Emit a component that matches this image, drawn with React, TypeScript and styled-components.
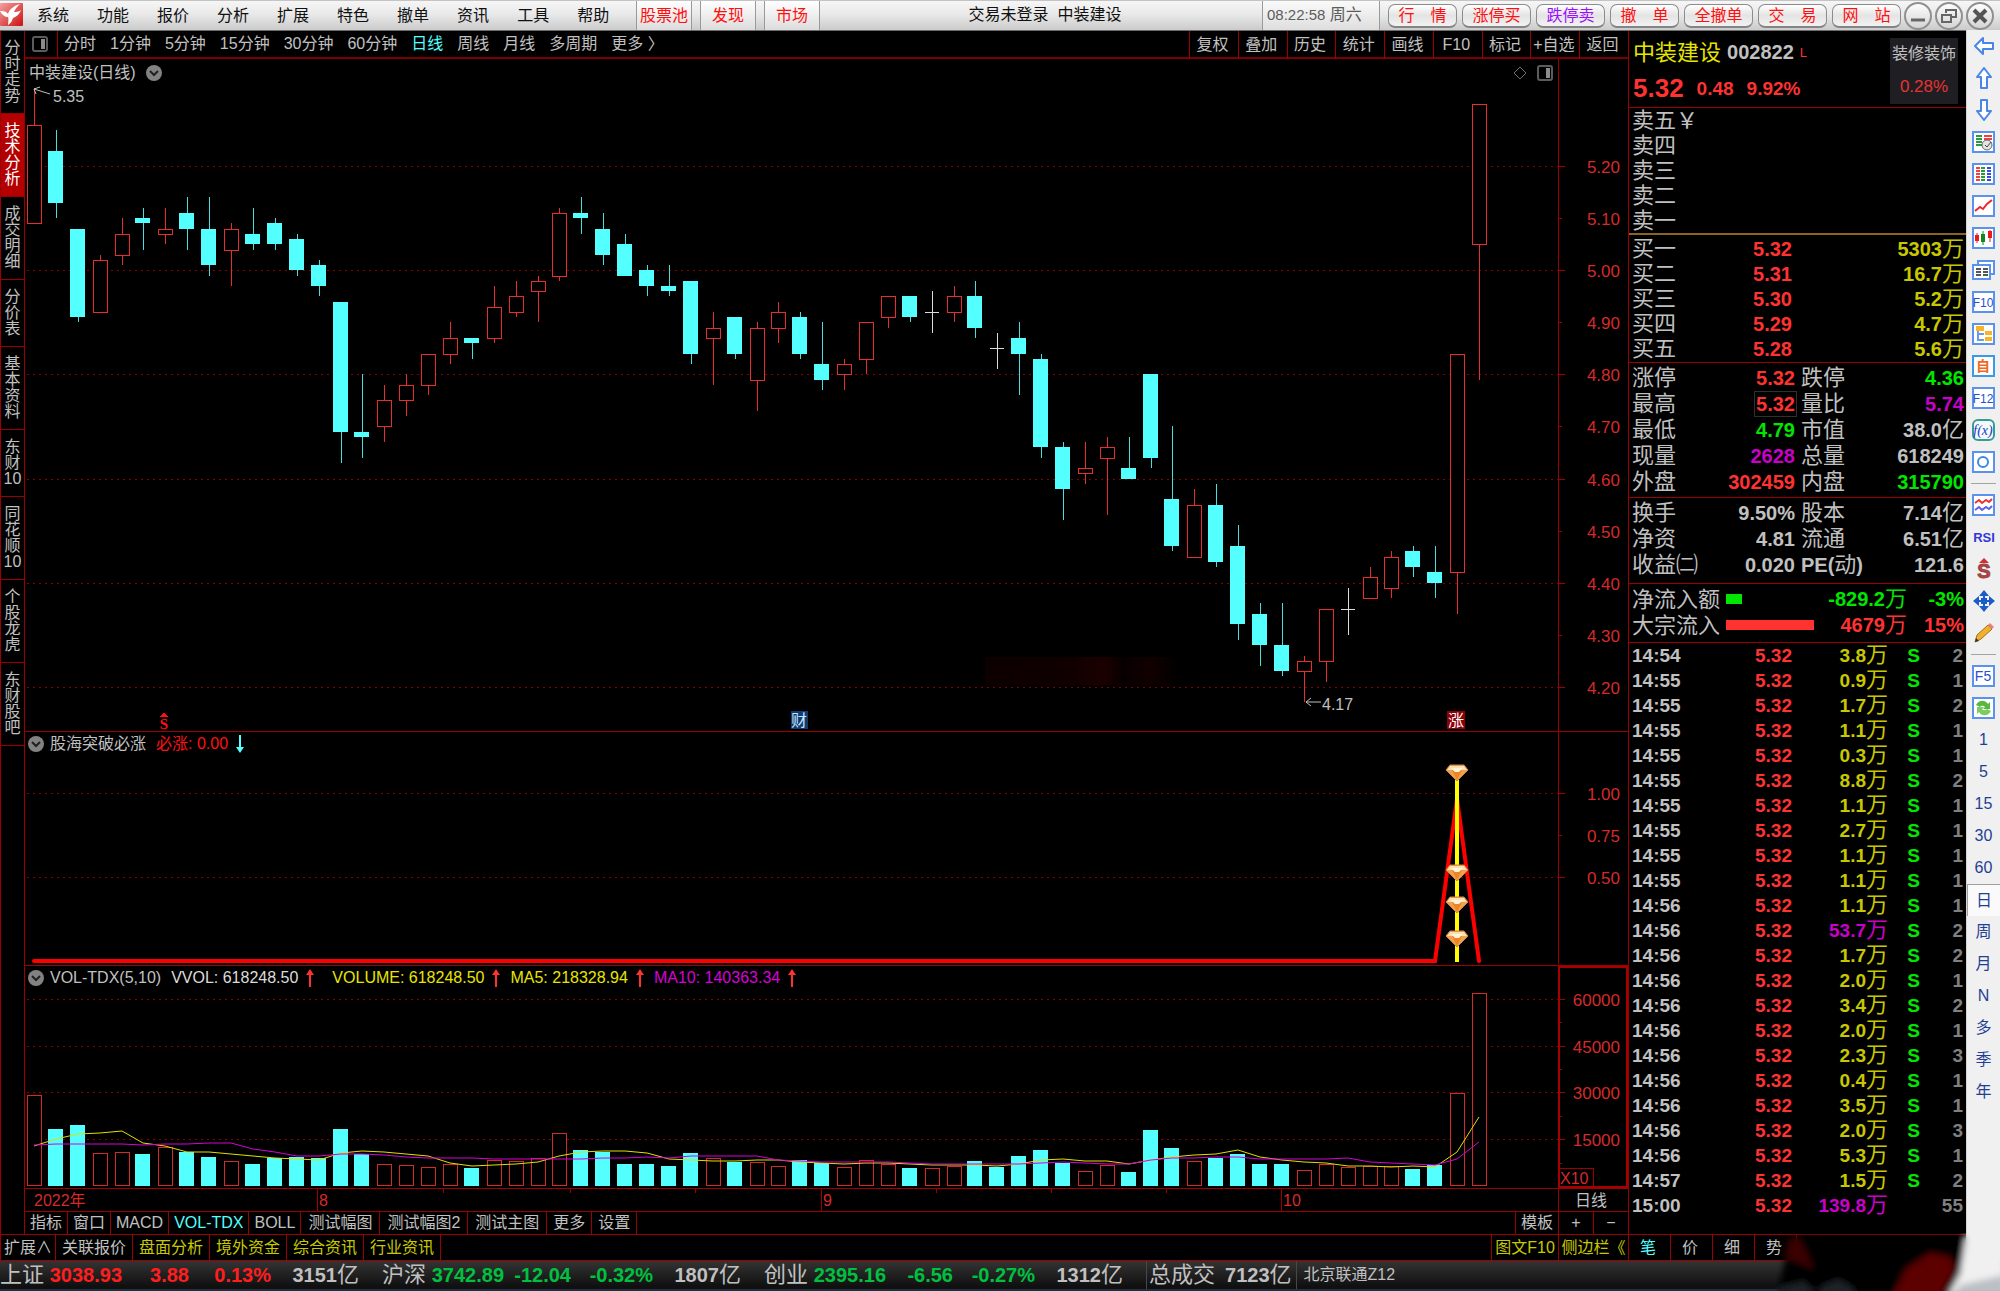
import React, { useLayoutEffect, useRef, useState } from "react";
import styled, { createGlobalStyle, css } from "styled-components";

const c = {
  line: "#9c0000",
  lineDim: "#7c0000",
  red: "#ff3232",
  axis: "#d42a2a",
  cyan: "#54ffff",
  green: "#00e600",
  yellow: "#c8c800",
  magenta: "#c800c8",
  text: "#c0c0c0",
  gray: "#808080",
};
const sans = `"Liberation Sans", "Noto Sans CJK SC", sans-serif`;

const Global = createGlobalStyle`
  * { box-sizing: border-box; }
  body { margin: 0; background: #000; font: 16px/20px ${sans}; color: ${c.text}; }
  button { font: inherit; color: inherit; background: none; border: 0; padding: 0; margin: 0; white-space: nowrap; cursor: pointer; }
  table { border-collapse: collapse; width: 100%; table-layout: fixed; }
  td, th { padding: 0; font-weight: 400; text-align: right; white-space: nowrap; }
  svg { display: block; }
`;

/* ---------- frame ---------- */
const Page = styled.div`
  height: 100vh;
  min-height: 900px;
  display: flex;
  flex-direction: column;
  overflow: hidden;
  position: relative;
`;
const Body = styled.div`
  flex: 1;
  min-height: 0;
  display: grid;
  grid-template-columns: minmax(0, 1fr) 338px 34px;
`;
const Left = styled.div`
  display: flex;
  flex-direction: column;
  min-height: 0;
`;
const Upper = styled.div`
  flex: 1;
  min-height: 0;
  display: grid;
  grid-template-columns: 25px minmax(0, 1fr);
  border-bottom: 1px solid ${c.line};
`;

/* ---------- title bar ---------- */
const TitleBar = styled.header`
  height: 31px;
  flex: none;
  display: flex;
  align-items: stretch;
  color: #101010;
  background: linear-gradient(#f6f6f6, #e9e9e9 45%, #cbcbcb);
  border-top: 1px solid #c4c4c4;
  border-bottom: 1px solid #6c6c6c;
`;
const LogoBox = styled.div`
  width: 37px;
  padding-top: 2px;
`;
const Menu = styled.nav`
  display: flex;
  gap: 28px;
  width: 599px;
`;
const HotButton = styled.button`
  color: #ff1010;
  width: 56px;
  margin-right: 8px;
  border-left: 1px solid #9a9a9a;
  border-right: 1px solid #9a9a9a;
  background: linear-gradient(#ffffff, #eeeeee 50%, #dcdcdc);
`;
const Caption = styled.div`
  flex: 1;
  text-align: center;
  line-height: 28px;
  white-space: pre;
`;
const Clock = styled.div`
  width: 118px;
  padding-left: 4px;
  line-height: 28px;
  color: #5c5c5c;
  border-left: 1px solid #9a9a9a;
  border-right: 1px solid #9a9a9a;
  background: linear-gradient(#fafafa, #dedede);
  white-space: nowrap;
  span { font-size: 15px; }
`;
const Quick = styled.div`
  display: flex;
  align-items: center;
  gap: 5px;
  padding: 0 3px 0 8px;
`;
const Pill = styled.button<{ $color?: string }>`
  width: 69px;
  height: 24px;
  border: 1px solid #8c8c8c;
  border-bottom: 2px solid #848484;
  border-radius: 7px;
  line-height: 21px;
  background: linear-gradient(#ffffff, #e4e4e4 50%, #f2f2f2);
  color: ${(p) => p.$color || "#ff1010"};
`;
const WinButtons = styled.div`
  display: flex;
  align-items: center;
  gap: 3px;
  padding-right: 6px;
`;
const WinButton = styled.button`
  width: 28px;
  height: 28px;
  border: 2px solid #909090;
  border-radius: 50%;
  display: grid;
  place-items: center;
  background: linear-gradient(#fdfdfd, #d4d4d4);
`;

/* ---------- left rail ---------- */
const Rail = styled.nav`
  border-left: 1px solid ${c.line};
  border-right: 1px solid ${c.line};
  overflow: hidden;
`;
const RailTab = styled.button<{ $on?: boolean }>`
  display: block;
  width: 100%;
  padding: 9px 0;
  line-height: 16px;
  border-bottom: 1px solid ${c.line};
  white-space: pre-line;
  ${(p) => p.$on && css`background: #b40000; color: #fff;`}
`;

/* ---------- centre ---------- */
const Centre = styled.div`
  display: flex;
  flex-direction: column;
  min-width: 0;
  min-height: 0;
`;
const Toolbar = styled.div`
  flex: none;
  height: 28px;
  display: flex;
  border-bottom: 2px solid ${c.lineDim};
`;
const ToggleBox = styled.button`
  width: 33px;
  padding-right: 2px;
  display: grid;
  place-items: center;
  border-right: 1px solid ${c.line};
`;
const Periods = styled.nav`
  display: flex;
  gap: 14px;
  padding-left: 6px;
  flex: 1;
  align-items: center;
`;
const Period = styled.button<{ $on?: boolean }>`
  line-height: 28px;
  color: ${(p) => (p.$on ? c.cyan : c.text)};
`;
const ToolCells = styled.div`
  display: grid;
  grid-template-columns: repeat(9, 1fr);
  width: 439px;
  button { border-left: 1px solid ${c.line}; padding-right: 3px; line-height: 28px; }
`;
const Panel = styled.section<{ $grow: number }>`
  flex: ${(p) => p.$grow} 1 0;
  min-height: 0;
  display: grid;
  grid-template: minmax(0, 1fr) / minmax(0, 1fr);
  border-bottom: 1px solid ${c.line};
`;
const Canvas = styled.div`
  grid-area: 1 / 1;
  min-height: 0;
  overflow: hidden;
`;
const PanelHead = styled.div<{ $tall?: boolean }>`
  grid-area: 1 / 1;
  align-self: start;
  z-index: 1;
  display: flex;
  align-items: center;
  height: ${(p) => (p.$tall ? 27 : 24)}px;
  padding: 0 75px 0 ${(p) => (p.$tall ? 4 : 3)}px;
  gap: ${(p) => (p.$tall ? 10 : 6)}px;
  white-space: nowrap;
`;
const Reading = styled.span<{ $color: string; $gap?: number }>`
  display: inline-flex;
  align-items: center;
  gap: 8px;
  color: ${(p) => p.$color};
  margin-left: ${(p) => p.$gap || 0}px;
`;
const Spacer = styled.span`flex: 1;`;
const DateAxis = styled.div`
  height: 23px;
  flex: none;
  border-bottom: 1px solid ${c.line};
`;
const Strip = styled.div<{ $h: number; $line?: boolean }>`
  flex: none;
  display: flex;
  height: ${(p) => p.$h}px;
  ${(p) => p.$line && css`border-left: 1px solid ${c.line};`}
`;
const StripTab = styled.button<{ $pad?: number; $w?: number; $color?: string; $side?: boolean }>`
  padding: 0 ${(p) => p.$pad ?? 5}px;
  ${(p) => p.$w && css`width: ${p.$w}px;`}
  color: ${(p) => p.$color || c.text};
  ${(p) => (p.$side ? css`border-left: 1px solid ${c.line};` : css`border-right: 1px solid ${c.line};`)}
`;

/* ---------- quote panel ---------- */
const Quote = styled.aside`
  border-left: 1px solid ${c.line};
  display: flex;
  flex-direction: column;
  min-height: 0;
  font-size: 22px;
  line-height: 25px;
`;
const QuoteHead = styled.div`
  height: 77px;
  flex: none;
  display: flex;
  justify-content: space-between;
  padding: 7px 8px 3px 4px;
  border-bottom: 1px solid ${c.line};
`;
const NameRow = styled.div`
  display: flex;
  align-items: center;
  gap: 6px;
  height: 28px;
  color: #e6e600;
  b { font-size: 20px; color: ${c.text}; }
  sup { font-size: 13px; line-height: 13px; color: ${c.red}; align-self: center; }
`;
const PriceRow = styled.div`
  display: flex;
  align-items: center;
  gap: 13px;
  height: 44px;
  color: ${c.red};
  font-weight: 700;
  font-size: 19px;
  strong { font-size: 26px; }
`;
const Sector = styled.div`
  width: 68px;
  background: #1f1f23;
  text-align: center;
  font-size: 16px;
  padding-top: 3px;
  white-space: nowrap;
  span { display: block; color: #e63232; font-size: 17px; padding-top: 8px; }
`;
const Block = styled.div<{ $top?: number; $bottom?: number; $color?: string }>`
  flex: none;
  padding: ${(p) => p.$top || 0}px 2px ${(p) => p.$bottom || 0}px 3px;
  border-bottom: ${(p) => (p.$color ? 2 : 1)}px solid ${(p) => p.$color || c.line};
`;
const BookRow = styled.tr`
  height: 25px;
  th { text-align: left; width: 80px; line-height: 24px; }
  td:nth-child(2) { width: 80px; }
  td { line-height: 20px; }
`;
const StatRow = styled.tr`
  height: 26px;
  th { text-align: left; font-weight: 400; line-height: 24px; }
  td { line-height: 20px; }
  th:first-child { width: 84px; }
  td:nth-child(2) { width: 79px; }
  th:nth-child(3) { width: 74px; padding-left: 6px; }
`;
const Num = styled.b<{ $color?: string; $small?: boolean; $boxed?: boolean }>`
  color: ${(p) => p.$color || c.text};
  font-size: ${(p) => (p.$small ? 19 : 20)}px;
  i { font-style: normal; font-weight: 400; font-size: 22px; line-height: 20px; }
  ${(p) => p.$boxed && css`outline: 1px solid #303030; outline-offset: 1px;`}
`;
const FlowRow = styled.div`
  display: grid;
  grid-template-columns: 94px 1fr 84px 57px;
  align-items: center;
  height: 26px;
  text-align: right;
  white-space: nowrap;
  > span:first-child { text-align: left; }
`;
const FlowBar = styled.span<{ $color: string }>`
  display: block;
  height: 10px;
  background: ${(p) => p.$color};
`;
const Ticks = styled.div`
  flex: 1;
  min-height: 0;
  overflow: hidden;
  padding: 0 3px 0 3px;
`;
const TickRow = styled.tr`
  height: 25px;
  line-height: 20px;
  td { height: 25px; }
  td:nth-child(1) { width: 60px; text-align: left; }
  td:nth-child(2) { width: 100px; }
  td:nth-child(3) { width: 96px; }
  td:nth-child(4) { width: 32px; }
`;
const QuoteTabs = styled.nav`
  height: 26px;
  flex: none;
  display: flex;
  border-top: 1px solid ${c.line};
  font-size: 16px;
  button { width: 42px; border-right: 1px solid ${c.line}; padding-right: 3px; }
  button:first-child { color: ${c.cyan}; }
`;

/* ---------- right tool column ---------- */
const Tools = styled.nav`
  background: #f0f0f0;
  border-left: 1px solid #d4d4d4;
  margin-top: -1px;
  color: #1f3f94;
  overflow: hidden;
`;
const Tool = styled.button<{ $on?: boolean }>`
  display: grid;
  place-items: center;
  width: 100%;
  height: 32px;
  ${(p) => p.$on && css`
    background: #fafafa;
    border-top: 1px solid #a0a0a0;
    border-left: 1px solid #a0a0a0;
  `}
`;
const ToolRule = styled.hr`
  margin: 5px 4px;
  border: 0;
  height: 1px;
  background: #a4a4a4;
`;

/* ---------- status bar ---------- */
const Status = styled.footer`
  height: 31px;
  flex: none;
  display: flex;
  align-items: center;
  background: linear-gradient(#343434, #101010 90%);
  border-top: 1px solid ${c.line};
  border-bottom: 2px solid #1c3040;
  font-size: 22px;
  line-height: 26px;
  white-space: nowrap;
`;
const IndexGroup = styled.div`
  display: grid;
  grid-template-columns: 49px 73px 67px 82px 88px;
  width: 382px;
  text-align: right;
  > span:first-child { text-align: left; }
`;
const StatusCell = styled.div<{ $small?: boolean }>`
  display: flex;
  align-items: center;
  gap: 10px;
  height: 28px;
  border-left: 1px solid #484848;
  font-size: ${(p) => (p.$small ? 16 : 22)}px;
  padding: 0 4px 0 ${(p) => (p.$small ? 7 : 2)}px;
`;
const Smear = styled.svg`
  position: absolute;
  right: 0;
  bottom: 0;
`;

/* ---------- data ---------- */
type Bar = [string, number, number, number, number, number];
const bars: Bar[] = [
  ["U", 528, 509, 535, 509, 91], ["D", 523, 513, 527, 510, 57], ["D", 508, 491, 508, 490, 61],
  ["U", 502, 492, 503, 492, 33], ["U", 507, 503, 510, 501, 34], ["D", 510, 509, 512, 504, 32],
  ["U", 508, 507, 512, 505, 39], ["D", 511, 508, 514, 504, 34], ["D", 508, 501, 514, 499, 29],
  ["U", 508, 504, 509, 497, 25], ["D", 507, 505, 512, 504, 22], ["D", 509, 505, 510, 504, 28],
  ["D", 506, 500, 507, 499, 29], ["D", 501, 497, 502, 495, 28], ["D", 494, 469, 494, 463, 57],
  ["D", 469, 468, 480, 464, 32], ["U", 475, 470, 478, 467, 22], ["U", 478, 475, 480, 472, 21],
  ["U", 484, 478, 484, 476, 19], ["U", 487, 484, 490, 482, 22], ["D", 487, 486, 487, 483, 18],
  ["U", 493, 487, 497, 486, 26], ["U", 495, 492, 498, 491, 25], ["U", 498, 496, 499, 490, 28],
  ["U", 511, 499, 512, 498, 53], ["D", 511, 510, 514, 507, 36], ["D", 508, 503, 511, 501, 34],
  ["D", 505, 499, 507, 499, 22], ["D", 500, 497, 501, 495, 22], ["D", 497, 496, 501, 495, 20],
  ["D", 498, 484, 498, 482, 33], ["U", 489, 487, 492, 478, 28], ["D", 491, 484, 491, 483, 24],
  ["U", 489, 479, 490, 473, 24], ["U", 492, 489, 494, 486, 20], ["D", 491, 484, 492, 483, 26],
  ["D", 482, 479, 490, 477, 23], ["U", 482, 480, 483, 477, 19], ["U", 490, 483, 490, 480, 26],
  ["U", 495, 491, 495, 489, 22], ["D", 495, 491, 495, 490, 18], ["F", 492, 492, 496, 488, 18],
  ["U", 495, 492, 497, 490, 20], ["D", 495, 489, 498, 487, 25], ["G", 485, 485, 488, 481, 19],
  ["D", 487, 484, 490, 476, 30], ["D", 483, 466, 484, 464, 36], ["D", 466, 458, 467, 452, 23],
  ["U", 462, 461, 467, 459, 15], ["U", 466, 464, 468, 453, 21], ["D", 462, 460, 468, 460, 14],
  ["D", 480, 464, 480, 462, 56], ["D", 456, 447, 470, 446, 38], ["U", 455, 445, 458, 445, 25],
  ["D", 455, 444, 459, 443, 28], ["D", 447, 432, 451, 429, 32], ["D", 434, 428, 436, 424, 22],
  ["D", 428, 423, 436, 422, 22], ["U", 425, 423, 426, 417, 16], ["U", 435, 425, 435, 421, 22],
  ["F", 435, 435, 439, 430, 19], ["U", 441, 437, 443, 437, 20], ["U", 445, 439, 446, 437, 20],
  ["D", 446, 443, 447, 441, 17], ["D", 442, 440, 447, 437, 21], ["U", 484, 442, 484, 434, 93],
  ["U", 532, 505, 532, 479, 193],
];
const average = (n: number, seed: number[]) =>
  bars.map((_, i) => (i < n - 1 ? seed[i] : bars.slice(i - n + 1, i + 1).reduce((s, b) => s + b[5], 0) / n));
const ma5 = average(5, [40, 47, 52, 53]);
const ma10 = average(10, [41, 42, 42, 42, 42, 41, 42, 42, 43]);

const AXIS = 70;
const xAt = (w: number, i: number) => Math.round(9 + (i * (w - AXIS - 88)) / 66);

function useSize() {
  const ref = useRef<HTMLDivElement>(null);
  const [size, setSize] = useState({ w: 1603, h: 200 });
  useLayoutEffect(() => {
    const el = ref.current!;
    const read = () => setSize({ w: el.clientWidth, h: el.clientHeight });
    read();
    const ro = new ResizeObserver(read);
    ro.observe(el);
    return () => ro.disconnect();
  }, []);
  return { ref, ...size };
}

/* ---------- small drawings ---------- */
const Chevron = () => (
  <svg width="16" height="16" viewBox="0 0 16 16" role="img" aria-label="展开">
    <circle cx="8" cy="8" r="8" fill="#828282" />
    <path d="M4 6l4 4 4-4" fill="none" stroke="#202020" strokeWidth="2" />
  </svg>
);
const PanelIcon = () => (
  <svg width="16" height="16" viewBox="0 0 16 16">
    <rect x="1" y="1" width="14" height="14" rx="2" fill="none" stroke="#5c5c5c" strokeWidth="2" />
    <rect x="9" y="3" width="4" height="10" fill="#8c8c8c" />
  </svg>
);
const Arrow = ({ down }: { down?: boolean }) => (
  <svg width="8" height="18" viewBox="0 0 8 18">
    {down ? (
      <path d="M3 0h2v12h3L4 18 0 12h3z" fill={c.cyan} />
    ) : (
      <path d="M3 18h2V6h3L4 0 0 6h3z" fill={c.red} />
    )}
  </svg>
);
const Logo = () => (
  <svg width="23" height="23" viewBox="0 0 23 23" role="img" aria-label="通达信">
    <defs>
      <linearGradient id="lg" x1="0" y1="0" x2="1" y2="1">
        <stop offset="0" stopColor="#f4a0a0" />
        <stop offset="1" stopColor="#cc1010" />
      </linearGradient>
    </defs>
    <rect width="23" height="23" rx="1" fill="url(#lg)" />
    <path d="M0 8c3 0 6 0 8 3 1-4 5-8 12-10-3 3-5 5-6 8 2 0 4 0 7-2-2 5-5 7-8 8-1 3-2 5-5 7 0-3 1-6 0-8-3 0-6-2-8-6z" fill="#fff" />
  </svg>
);
const Gem = ({ x, y }: { x: number; y: number }) => (
  <g transform={`translate(${x - 11} ${y})`}>
    <path d="M4 0h14l4 5-11 11L0 5z" fill="#f2a04c" stroke="#c98a4e" />
    <path d="M4 1h14l3 4H1z" fill="#ffdfae" />
    <path d="M6 5h10l-5 10z" fill="#ee8424" />
    <path d="M5 3h12l-4 4H9z" fill="#fff3dc" />
  </g>
);

/* ---------- charts ---------- */
function Axis({ w, h, marks, minor, y }: { w: number; h: number; marks: [number, string, boolean][]; minor?: number[]; y: (v: number) => number }) {
  const ax = w - AXIS;
  return (
    <g>
      {marks.map(([v, label, major]) => {
        const yy = Math.round(y(v));
        return (
          <g key={label}>
            {major && <line x1="2" x2={ax} y1={yy} y2={yy} stroke="#860000" strokeWidth="1" strokeDasharray="2 4" />}
            <line x1={ax} x2={ax + (major ? 7 : 4)} y1={yy} y2={yy} stroke={c.line} />
            <text x={w - 8} y={yy + 7} fill={c.axis} fontSize="17" textAnchor="end">{label}</text>
          </g>
        );
      })}
      {(minor || []).map((v) => (
        <line key={v} x1={ax} x2={ax + 4} y1={y(v)} y2={y(v)} stroke={c.line} />
      ))}
      <line x1={ax} x2={ax} y1="0" y2={h} stroke={c.line} />
    </g>
  );
}

function PriceChart() {
  const { ref, w, h } = useSize();
  const top = 540.6;
  const y = (p: number) => Math.round(((top - p) / 129.1) * h);
  const badge = h - 20;
  return (
    <Canvas ref={ref}>
      <svg width={w} height={h} shapeRendering="crispEdges" role="img" aria-label="中装建设日线">
        <defs>
          <linearGradient id="haze">
            <stop offset="0" stopColor="#0c0000" /><stop offset=".45" stopColor="#100000" />
            <stop offset=".62" stopColor="#1c0000" /><stop offset=".72" stopColor="#070000" />
            <stop offset=".86" stopColor="#120000" /><stop offset="1" stopColor="#020000" />
          </linearGradient>
        </defs>
        <rect x={xAt(w, 43) + 10} y={h - 74} width="192" height="28" fill="url(#haze)" />
        <Axis w={w} h={h} y={y} marks={[520, 510, 500, 490, 480, 470, 460, 450, 440, 430, 420].map((v) => [v, (v / 100).toFixed(2), v % 20 === 0])} />
        {bars.map(([k, t, b, hi, lo], i) => {
          const x = xAt(w, i);
          if (k === "U")
            return (
              <g key={i} stroke="#e62e2e" fill="none">
                <path d={`M${x} ${y(hi)}V${y(t)}M${x} ${y(b)}V${y(lo)}`} />
                <rect x={x - 7} y={y(t)} width="14" height={y(b) - y(t)} fill="#000" />
              </g>
            );
          if (k === "D")
            return (
              <g key={i}>
                <path d={`M${x} ${y(hi)}V${y(lo)}`} stroke="#48dede" />
                <rect x={x - 8} y={y(t)} width="15" height={Math.max(5, y(b) - y(t))} fill={c.cyan} />
              </g>
            );
          return <path key={i} d={`M${x} ${y(hi)}V${y(lo)}M${x - 7} ${y(t)}h14`} stroke="#dcdcdc" />;
        })}
        <g fill="none" stroke={c.text} shapeRendering="auto">
          <path d={`M${xAt(w, 0) + 16} ${y(535) + 6}l-16-5m2 5l-2-5 6-2`} />
          <path d={`M${xAt(w, 58) + 17} ${y(417)}h-15m5-4l-5 4 5 4`} />
        </g>
        <text x={xAt(w, 0) + 19} y={y(535) + 14} fill={c.text} fontSize="16">5.35</text>
        <text x={xAt(w, 58) + 18} y={y(417) + 8} fill={c.text} fontSize="16">4.17</text>
        <path d={`M${xAt(w, 6) - 6} ${badge + 6}l5-4 5 4z`} fill="#ff1010" />
        <text x={xAt(w, 6) - 1} y={badge + 18} fill="#ff1010" fontSize="15" fontWeight="700" textAnchor="middle" fontFamily="Liberation Serif, serif">S</text>
        <rect x={xAt(w, 35) - 9} y={badge} width="17" height="18" fill="#0c3c70" />
        <text x={xAt(w, 35) - 1} y={badge + 15} fill="#cfe2f6" fontSize="16" textAnchor="middle">财</text>
        <rect x={xAt(w, 65) - 10} y={badge} width="18" height="18" fill="#8c0008" />
        <text x={xAt(w, 65) - 1} y={badge + 15} fill="#fff" fontSize="16" textAnchor="middle">涨</text>
      </svg>
    </Canvas>
  );
}

function SignalChart() {
  const { ref, w, h } = useSize();
  const y = (v: number) => Math.round(h - 3 - v * (h - 4) * 0.735);
  const x = xAt(w, 65);
  return (
    <Canvas ref={ref}>
      <svg width={w} height={h} role="img" aria-label="股海突破必涨">
        <g shapeRendering="crispEdges">
          <Axis w={w} h={h} y={y} marks={[[1, "1.00", true], [0.75, "0.75", false], [0.5, "0.50", true]]} />
        </g>
        <path d={`M9 ${y(0)}H${xAt(w, 64)}L${x} ${y(1) + 6}L${xAt(w, 66)} ${y(0)}`} fill="none" stroke="#ff0000" strokeWidth="4" strokeLinecap="round" />
        <rect x={x - 2} y={y(1) - 18} width="4" height={y(0) - y(1) + 19} fill="#ffff00" />
        {[1.17, 0.575, 0.38, 0.18].map((v) => <Gem key={v} x={x} y={y(v)} />)}
      </svg>
    </Canvas>
  );
}

function VolumeChart() {
  const { ref, w, h } = useSize();
  const k = h / 222;
  const y = (s: number) => Math.round(h - 2 - s * k);
  const path = (m: number[]) => m.map((v, i) => `${i ? "L" : "M"}${xAt(w, i)} ${y(v)}`).join("");
  const ax = w - AXIS;
  return (
    <Canvas ref={ref}>
      <svg width={w} height={h} shapeRendering="crispEdges" role="img" aria-label="成交量">
        <Axis w={w} h={h} y={y} minor={[23, 70, 117, 164]} marks={[[187, "60000", true], [140, "45000", true], [94, "30000", true], [47, "15000", true]]} />
        {bars.map(([kind, , , , , v], i) => {
          const x = xAt(w, i);
          return kind === "U" || kind === "F" ? (
            <rect key={i} x={x - 7} y={y(v)} width="14" height={y(0) - y(v) - 1} fill="#000" stroke="#d42a2a" />
          ) : (
            <rect key={i} x={x - 8} y={y(v)} width="15" height={y(0) - y(v)} fill={c.cyan} />
          );
        })}
        <g fill="none" shapeRendering="auto">
          <path d={path(ma5)} stroke="#e0e000" />
          <path d={path(ma10)} stroke="#d800d8" />
        </g>
        <rect x={ax + 1} y="1" width={AXIS - 2} height={h - 2} fill="none" stroke="#a80000" strokeWidth="2" />
        <path d={`M${ax} ${h - 20}h35v20`} fill="none" stroke={c.line} />
        <text x={ax + 2} y={h - 4} fill={c.axis} fontSize="16">X10</text>
      </svg>
    </Canvas>
  );
}

function Dates() {
  const { ref, w, h } = useSize();
  const s = (w - AXIS) / 1533;
  return (
    <DateAxis ref={ref}>
      <svg width={w} height={h} shapeRendering="crispEdges">
        <text x="9" y="17" fill={c.axis} fontSize="16">2022年</text>
        {([[292, "8"], [796, "9"], [1256, "10"]] as [number, string][]).map(([x, t]) => (
          <g key={t}>
            <line x1={x * s} x2={x * s} y1="0" y2={h} stroke={c.line} />
            <text x={x * s + 2} y="17" fill={c.axis} fontSize="16">{t}</text>
          </g>
        ))}
        {[418, 545, 670, 911, 1026, 1141].map((x) => <line key={x} x1={x * s} x2={x * s} y1="0" y2="4" stroke={c.line} />)}
        <line x1={w - AXIS} x2={w - AXIS} y1="0" y2={h} stroke={c.line} />
        <text x={w - 37} y="17" fill={c.text} fontSize="16" textAnchor="middle">日线</text>
      </svg>
    </DateAxis>
  );
}

/* ---------- tool icons ---------- */
const Frame = ({ children, stroke = "#5a92ee" }: { children?: React.ReactNode; stroke?: string }) => (
  <svg width="23" height="22" viewBox="0 0 23 22">
    <rect x="1" y="1" width="21" height="20" fill="#fff" stroke={stroke} strokeWidth="2" />
    {children}
  </svg>
);
const Word = ({ t, size = 14, color = "#2a50d0", weight = 400 }: { t: string; size?: number; color?: string; weight?: number }) => (
  <text x="11" y="16" fontSize={size} fontWeight={weight} fill={color} textAnchor="middle">{t}</text>
);
const HollowArrow = ({ d }: { d: string }) => (
  <svg width="22" height="22" viewBox="0 0 22 22"><path d={d} fill="#fff" stroke="#4a86e8" strokeWidth="2" strokeLinejoin="round" /></svg>
);
const icons: [string, React.ReactNode][] = [
  ["后退", <HollowArrow d="M2 11l8-8v5h10v6H10v5z" />],
  ["上翻", <HollowArrow d="M11 1l7 9h-4v11H8V10H4z" />],
  ["下翻", <HollowArrow d="M11 21l7-9h-4V1H8v11H4z" />],
  ["行情报价", <Frame><path d="M4 5h6M4 8h6M4 11h6M4 14h6" stroke="#2a9a3a" strokeWidth="2" /><path d="M12 5h8M12 8h8" stroke="#f04040" strokeWidth="2" /><circle cx="15" cy="14" r="5" fill="#e4e4e4" stroke="#666" /><path d="M13 14l2 2 4-5" stroke="#444" fill="none" /></Frame>],
  ["多股列表", <Frame><path d="M6 4v15" stroke="#f04040" strokeWidth="4" strokeDasharray="2 1" /><path d="M11 4v15" stroke="#2a9a3a" strokeWidth="4" strokeDasharray="2 1" /><path d="M17 4v15" stroke="#3848e0" strokeWidth="4" strokeDasharray="2 1" /></Frame>],
  ["分时图", <Frame><path d="M3 16l5-4 3 2 4-5 5-4" fill="none" stroke="#f02828" strokeWidth="2" /></Frame>],
  ["K线图", <Frame><path d="M5 6v10M18 3v12" stroke="#f01818" /><path d="M11 4v14" stroke="#108a20" /><path d="M3 8h4v6H3zM16 4h4v7h-4z" fill="#f01818" /><path d="M9 7h4v8H9z" fill="#108a20" /></Frame>],
  ["资讯", <svg width="23" height="22" viewBox="0 0 23 22"><rect x="6" y="2" width="16" height="13" fill="#fff" stroke="#5a92ee" strokeWidth="2" /><rect x="1" y="6" width="17" height="14" fill="#fff" stroke="#5a92ee" strokeWidth="2" /><path d="M4 10h5M4 13h5M4 16h5M11 10h5M11 13h5M11 16h5" stroke="#555" strokeWidth="2" /></svg>],
  ["F10", <Frame><Word t="F10" size={12} /></Frame>],
  ["板块", <Frame><path d="M6 7v10h6M6 11h6" fill="none" stroke="#6a9aee" strokeWidth="2" /><path d="M4 3h8v5H4zM13 8h7v4h-7zM13 14h7v4h-7z" fill="#f8b424" /></Frame>],
  ["自选股", <Frame stroke="#3a9ae8"><Word t="自" color="#f06820" weight={700} /></Frame>],
  ["F12", <Frame><Word t="F12" size={12} /></Frame>],
  ["公式", <svg width="23" height="22" viewBox="0 0 23 22"><rect x="1" y="1" width="21" height="20" rx="5" fill="#f4fbfb" stroke="#3a9a94" strokeWidth="2" /><text x="11" y="16" fontSize="14" fontStyle="italic" fontFamily="Liberation Serif, serif" fill="#2038c8" textAnchor="middle">f(x)</text></svg>],
  ["圈选", <Frame><circle cx="11" cy="11" r="5" fill="none" stroke="#3a8ae0" strokeWidth="2" /></Frame>],
  ["-", null],
  ["叠加走势", <Frame><path d="M3 9l4-3 3 3 4-3 3 2 3-3" fill="none" stroke="#f03030" strokeWidth="2" /><path d="M3 16l4-3 3 3 4-3 3 2 3-3" fill="none" stroke="#6060e8" strokeWidth="2" /></Frame>],
  ["RSI", <svg width="24" height="22"><text x="12" y="16" fontSize="13" fontWeight="700" fill="#3038d8" textAnchor="middle">RSI</text></svg>],
  ["资金", <svg width="22" height="24" viewBox="0 0 22 24"><path d="M6 6l5-5 5 5z" fill="#d43030" /><text x="11" y="21" fontSize="20" fontWeight="700" fill="#c83c3c" stroke="#8a4a4a" textAnchor="middle">S</text></svg>],
  ["移动", <svg width="22" height="22" viewBox="0 0 22 22"><path d="M11 0l5 6H6zM11 22l5-6H6zM0 11l6-5v10zM22 11l-6-5v10zM8 8h6v6H8z" fill="#1c5cc8" /><path d="M11 5v12M5 11h12" stroke="#1c5cc8" strokeWidth="2" /></svg>],
  ["画线", <svg width="22" height="22" viewBox="0 0 22 22"><path d="M2 20l2-7L15 3l4 4L8 17z" fill="#f0b030" stroke="#a07020" /><path d="M15 3l2-2 4 4-2 2z" fill="#e88080" /><path d="M2 20l1-4 3 3z" fill="#333" /></svg>],
  ["-", null],
  ["F5", <Frame><Word t="F5" /></Frame>],
  ["刷新", <Frame><path d="M4 8c3-6 10-5 12-1l2-2v7h-7l2-2c-2-2-4-1-5 0z" fill="#58b840" /><path d="M19 14c-3 6-10 5-12 1l-2 2v-7h7l-2 2c2 2 4 1 5 0z" fill="#7ccc60" /></Frame>],
];

const ticks = "14:54 3.8 2,14:55 0.9 1,14:55 1.7 2,14:55 1.1 1,14:55 0.3 1,14:55 8.8 2,14:55 1.1 1,14:55 2.7 1,14:55 1.1 1,14:55 1.1 1,14:56 1.1 1,14:56 53.7 2,14:56 1.7 2,14:56 2.0 1,14:56 3.4 2,14:56 2.0 1,14:56 2.3 3,14:56 0.4 1,14:56 3.5 1,14:56 2.0 3,14:56 5.3 1,14:57 1.5 2,15:00 139.8 55"
  .split(",")
  .map((r) => r.split(" "));

type Cell = [string, string, string?, string?];
const statsA: [Cell, Cell][] = [
  [["涨停", "5.32", c.red], ["跌停", "4.36", c.green]],
  [["最高", "5.32", c.red], ["量比", "5.74", c.magenta]],
  [["最低", "4.79", c.green], ["市值", "38.0", c.text, "亿"]],
  [["现量", "2628", c.magenta], ["总量", "618249", c.text]],
  [["外盘", "302459", c.red], ["内盘", "315790", c.green]],
];
const statsB: [Cell, Cell][] = [
  [["换手", "9.50%"], ["股本", "7.14", c.text, "亿"]],
  [["净资", "4.81"], ["流通", "6.51", c.text, "亿"]],
  [["收益㈡", "0.020"], ["PE(动)", "121.6"]],
];
const Stats = ({ rows }: { rows: [Cell, Cell][] }) => (
  <table>
    <tbody>
      {rows.map(([a, b]) => (
        <StatRow key={a[0]}>
          <th scope="row">{a[0]}</th>
          <td><Num $color={a[2]} $boxed={a[0] === "最高"}>{a[1]}</Num></td>
          <th scope="row">{b[0] === "PE(动)" ? <><Num>PE(</Num>动<Num>)</Num></> : b[0]}</th>
          <td><Num $color={b[2]}>{b[1]}<i>{b[3]}</i></Num></td>
        </StatRow>
      ))}
    </tbody>
  </table>
);

const indices = [
  ["上证", "3038.93", "3.88", "0.13%", "3151", "#ff1e1e"],
  ["沪深", "3742.89", "-12.04", "-0.32%", "1807", "#00c040"],
  ["创业", "2395.16", "-6.56", "-0.27%", "1312", "#00c040"],
];

export default function App() {
  return (
    <Page>
      <Global />
      <TitleBar>
        <LogoBox><Logo /></LogoBox>
        <Menu>
          {["系统", "功能", "报价", "分析", "扩展", "特色", "撤单", "资讯", "工具", "帮助"].map((t) => <button key={t}>{t}</button>)}
        </Menu>
        {["股票池", "发现", "市场"].map((t) => <HotButton key={t}>{t}</HotButton>)}
        <Caption>{"交易未登录  中装建设"}</Caption>
        <Clock><span>08:22:58</span> 周六</Clock>
        <Quick>
          {["行　情", "涨停买", "跌停卖", "撤　单", "全撤单", "交　易", "网　站"].map((t) => (
            <Pill key={t} $color={t === "跌停卖" ? "#9a10ff" : undefined}>{t}</Pill>
          ))}
        </Quick>
        <WinButtons>
          <WinButton aria-label="最小化"><svg width="16" height="16"><path d="M1 12h14" stroke="#666" strokeWidth="3" /></svg></WinButton>
          <WinButton aria-label="还原"><svg width="16" height="16"><path d="M5 5V2h10v7h-4M1 7h9v7H1z" fill="none" stroke="#666" strokeWidth="2" /></svg></WinButton>
          <WinButton aria-label="关闭"><svg width="16" height="16"><path d="M2 2l12 12M14 2L2 14" stroke="#555" strokeWidth="4" /></svg></WinButton>
        </WinButtons>
      </TitleBar>

      <Body>
        <Left>
          <Upper>
            <Rail>
              {["分时走势", "技术分析", "成交明细", "分价表", "基本资料", "东财10", "同花顺10", "个股龙虎", "东财股吧"].map((t) => (
                <RailTab key={t} $on={t === "技术分析"}>{t.match(/\d+|./g)!.join("\n")}</RailTab>
              ))}
            </Rail>
            <Centre>
              <Toolbar>
                <ToggleBox aria-label="侧栏"><PanelIcon /></ToggleBox>
                <Periods>
                  {["分时", "1分钟", "5分钟", "15分钟", "30分钟", "60分钟", "日线", "周线", "月线", "多周期"].map((t) => (
                    <Period key={t} $on={t === "日线"}>{t}</Period>
                  ))}
                  <Period>更多 〉</Period>
                </Periods>
                <ToolCells>
                  {["复权", "叠加", "历史", "统计", "画线", "F10", "标记", "+自选", "返回"].map((t) => <button key={t}>{t}</button>)}
                </ToolCells>
              </Toolbar>
              <Panel $grow={674}>
                <PriceChart />
                <PanelHead $tall>
                  <span>中装建设(日线)</span>
                  <Chevron />
                  <Spacer />
                  <svg width="14" height="14" viewBox="0 0 14 14"><path d="M7 1l6 6-6 6-6-6z" fill="none" stroke="#6c6c6c" /></svg>
                  <PanelIcon />
                </PanelHead>
              </Panel>
              <Panel $grow={233}>
                <SignalChart />
                <PanelHead>
                  <Chevron />
                  <span>股海突破必涨</span>
                  <Reading $color="#ff1010" $gap={4}>必涨: 0.00<Arrow down /></Reading>
                </PanelHead>
              </Panel>
              <Panel $grow={223}>
                <VolumeChart />
                <PanelHead>
                  <Chevron />
                  <span>VOL-TDX(5,10)</span>
                  <Reading $color="#dcdcdc" $gap={4}>VVOL: 618248.50<Arrow /></Reading>
                  <Reading $color="#e6e600" $gap={12}>VOLUME: 618248.50<Arrow /></Reading>
                  <Reading $color="#e6e600" $gap={4}>MA5: 218328.94<Arrow /></Reading>
                  <Reading $color="#d800d8" $gap={4}>MA10: 140363.34<Arrow /></Reading>
                </PanelHead>
              </Panel>
              <Dates />
              <Strip $h={22}>
                {([["指标", 5], ["窗口", 5], ["MACD", 5], ["VOL-TDX", 5], ["BOLL", 5], ["测试幅图", 7], ["测试幅图2", 7], ["测试主图", 7], ["更多", 6], ["设置", 6]] as [string, number][]).map(([t, p]) => (
                  <StripTab key={t} $pad={p} $color={t === "VOL-TDX" ? c.cyan : undefined}>{t}</StripTab>
                ))}
                <Spacer />
                <StripTab $side $w={43}>模板</StripTab>
                <StripTab $side $w={35}>+</StripTab>
                <StripTab $side $w={35}>−</StripTab>
              </Strip>
            </Centre>
          </Upper>
          <Strip $h={25} $line>
            <StripTab $pad={3}>扩展∧</StripTab>
            <StripTab $pad={6}>关联报价</StripTab>
            {["盘面分析", "境外资金", "综合资讯", "行业资讯"].map((t) => <StripTab key={t} $pad={6} $color={c.yellow}>{t}</StripTab>)}
            <Spacer />
            <StripTab $side $w={67} $pad={1} $color={c.yellow}>图文F10</StripTab>
            <StripTab $side $w={70} $pad={1} $color={c.yellow}>侧边栏《</StripTab>
          </Strip>
        </Left>

        <Quote>
          <QuoteHead>
            <div>
              <NameRow>中装建设<b>002822</b><sup>L</sup></NameRow>
              <PriceRow><strong>5.32</strong><span>0.48</span><span>9.92%</span></PriceRow>
            </div>
            <Sector>装修装饰<span>0.28%</span></Sector>
          </QuoteHead>
          <Block $color="#8a6420">
            <table><tbody>
              {["五", "四", "三", "二", "一"].map((n) => (
                <BookRow key={n}><th scope="row">卖{n}{n === "五" ? "￥" : ""}</th><td /><td /></BookRow>
              ))}
            </tbody></table>
          </Block>
          <Block $top={1} $bottom={1}>
            <table><tbody>
              {[["一", "5.32", "5303"], ["二", "5.31", "16.7"], ["三", "5.30", "5.2"], ["四", "5.29", "4.7"], ["五", "5.28", "5.6"]].map(([n, p, v]) => (
                <BookRow key={n}>
                  <th scope="row">买{n}</th>
                  <td><Num $color={c.red}>{p}</Num></td>
                  <td><Num $color={c.yellow}>{v}<i>万</i></Num></td>
                </BookRow>
              ))}
            </tbody></table>
          </Block>
          <Block $top={2} $bottom={2}><Stats rows={statsA} /></Block>
          <Block $top={2} $bottom={5}><Stats rows={statsB} /></Block>
          <Block $top={2} $bottom={4}>
            <FlowRow>
              <span>净流入额</span>
              <FlowBar $color={c.green} style={{ width: 16 }} />
              <Num $color={c.green}>-829.2<i>万</i></Num>
              <Num $color={c.green}>-3%</Num>
            </FlowRow>
            <FlowRow>
              <span>大宗流入</span>
              <FlowBar $color={c.red} style={{ width: 88 }} />
              <Num $color={c.red}>4679<i>万</i></Num>
              <Num $color={c.red}>15%</Num>
            </FlowRow>
          </Block>
          <Ticks>
            <table><tbody>
              {ticks.map(([t, v, n], i) => (
                <TickRow key={i}>
                  <td><Num $small>{t}</Num></td>
                  <td><Num $small $color={c.red}>5.32</Num></td>
                  <td><Num $small $color={v.length > 3 ? c.magenta : c.yellow}>{v}<i>万</i></Num></td>
                  <td><Num $small $color={c.green}>{i < 22 ? "S" : ""}</Num></td>
                  <td><Num $small $color={c.gray}>{n}</Num></td>
                </TickRow>
              ))}
            </tbody></table>
          </Ticks>
          <QuoteTabs>{["笔", "价", "细", "势"].map((t) => <button key={t}>{t}</button>)}</QuoteTabs>
        </Quote>

        <Tools>
          {icons.map(([label, icon], i) => (icon ? <Tool key={i} aria-label={label}>{icon}</Tool> : <ToolRule key={i} />))}
          {["1", "5", "15", "30", "60", "日", "周", "月", "N", "多", "季", "年"].map((t) => <Tool key={t} $on={t === "日"}>{t}</Tool>)}
        </Tools>
      </Body>

      <Status>
        {indices.map(([n, v, d, p, a, color]) => (
          <IndexGroup key={n}>
            <span>{n}</span>
            <Num $color={color}>{v}</Num>
            <Num $color={color}>{d}</Num>
            <Num $color={color}>{p}</Num>
            <Num>{a}<i>亿</i></Num>
          </IndexGroup>
        ))}
        <StatusCell>总成交 <Num>7123<i>亿</i></Num></StatusCell>
        <StatusCell $small>北京联通Z12</StatusCell>
      </Status>

      <Smear width="224" height="58" viewBox="0 0 224 58" aria-hidden="true">
        <defs><filter id="soft" x="-20%" y="-20%" width="140%" height="140%"><feGaussianBlur stdDeviation="3" /></filter></defs>
        <g filter="url(#soft)">
          <path d="M14 4L192 4l-6 28-14 34H0l8-34z" fill="#030303" />
          <path d="M14 4l10 2 14 30-30-12z" fill="#3a0000" />
          <path d="M4 54l24-6 14 14H0zM44 54l18-8 14 8 6 10H44z" fill="#1e2226" />
          <path d="M116 64l14-28 24-16 20 4 6 12-16 30z" fill="#5c0000" />
          <path d="M190 2h40v60h-58l12-22z" fill="#f0f0f0" />
          <path d="M184 52l44-10v22h-52z" fill="#bcc0c4" />
        </g>
      </Smear>
    </Page>
  );
}
